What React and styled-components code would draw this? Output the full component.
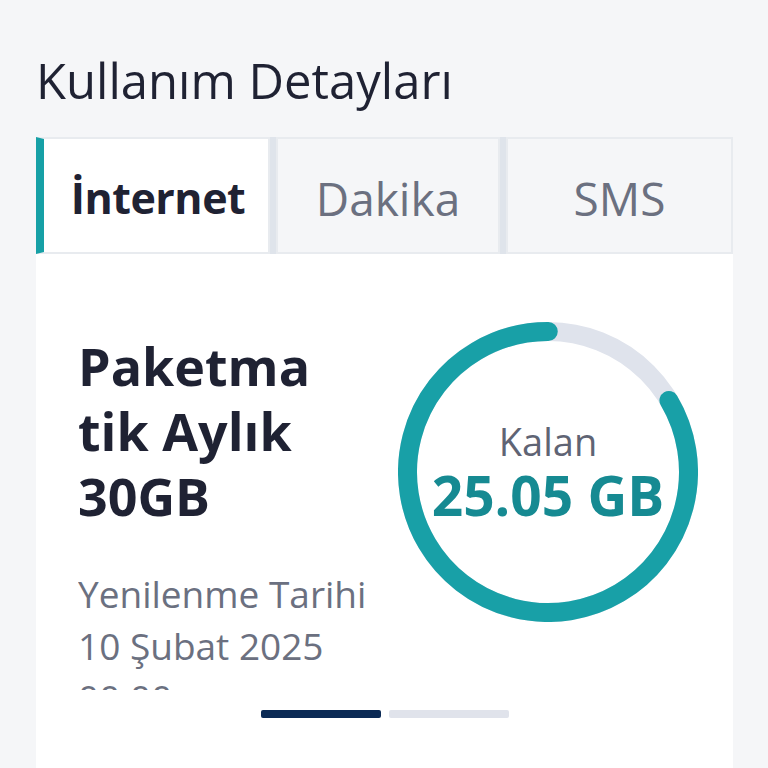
import React from "react";
import styled, { createGlobalStyle } from "styled-components";

const GlobalStyle = createGlobalStyle`
  html, body {
    margin: 0;
    padding: 0;
    background: #f5f6f8;
    font-family: "Open Sans", "Noto Sans", sans-serif;
  }
  * { box-sizing: border-box; }
`;

const Page = styled.div`
  padding: 52px 35px 0 36px;
  height: 768px;
  overflow: hidden;
`;

const Heading = styled.h1`
  margin: 0 0 29px;
  font-size: 49px;
  line-height: 56px;
  font-weight: 400;
  color: #1f2233;
`;

const Tabs = styled.div`
  display: grid;
  grid-template-columns: 234fr 224fr 227fr;
  gap: 6px;
  background: #dfe4eb;
`;

const Tab = styled.button`
  height: 117px;
  border: 2px solid #e8ebef;
  border-left: ${(p) => (p.$active ? "8px solid #16a0a6" : "2px solid #e8ebef")};
  background: ${(p) => (p.$active ? "#fff" : "#f5f6f8")};
  color: ${(p) => (p.$active ? "#1f2233" : "#6b7080")};
  font-family: inherit;
  font-size: ${(p) => (p.$active ? "43px" : "46px")};
  font-weight: ${(p) => (p.$active ? 700 : 400)};
  letter-spacing: ${(p) => (p.$active ? "-0.5px" : "0")};
  padding: 4px 0 0 ${(p) => (p.$active ? "4px" : "0")};
  cursor: pointer;
`;

const Card = styled.div`
  background: #fff;
`;

const Slide = styled.div`
  display: flex;
  justify-content: space-between;
  height: 436px;
  padding: 0 35px 0 42px;
`;

const Info = styled.div`
  padding-top: 79px;
  overflow: hidden;
`;

const PlanName = styled.h2`
  margin: 0 0 40px;
  width: 240px;
  font-size: 52px;
  line-height: 65px;
  font-weight: 700;
  color: #1f2233;
  word-break: break-all;
`;

const Renewal = styled.p`
  margin: 0;
  font-size: 37px;
  line-height: 52px;
  color: #6b7080;
  white-space: nowrap;
`;

const Gauge = styled.div`
  position: relative;
  width: 300px;
  height: 300px;
  margin-top: 68px;
  flex-shrink: 0;
`;

const GaugeText = styled.div`
  position: absolute;
  inset: 0;
  display: flex;
  flex-direction: column;
  align-items: center;
  padding-top: 95px;
`;

const GaugeLabel = styled.span`
  font-size: 38px;
  line-height: 48px;
  color: #5f6474;
`;

const GaugeValue = styled.span`
  font-size: 55px;
  line-height: 60px;
  font-weight: 700;
  color: #168a92;
`;

const Dots = styled.div`
  display: flex;
  justify-content: center;
  gap: 8px;
  padding: 20px 0 60px;
`;

const Dot = styled.span`
  width: 120px;
  height: 8px;
  border-radius: 2px;
  background: ${(p) => (p.$active ? "#0b2a55" : "#e0e3eb")};
`;

const Ring = ({ ratio }) => {
  const r = 140.5;
  const c = 2 * Math.PI * r;
  const start = (1 - ratio) * 360 - 90;
  return (
    <svg width="300" height="300" viewBox="0 0 300 300">
      <circle cx="150" cy="150" r={r} fill="none" stroke="#dfe3ec" strokeWidth="19" />
      <circle
        cx="150"
        cy="150"
        r={r}
        fill="none"
        stroke="#18a0a7"
        strokeWidth="19"
        strokeLinecap="round"
        strokeDasharray={`${c * ratio} ${c}`}
        transform={`rotate(${start} 150 150)`}
      />
    </svg>
  );
};

const App = () => {
  const total = 30;
  const left = 25.05;
  return (
    <>
      <GlobalStyle />
      <Page>
        <Heading>Kullanım Detayları</Heading>
        <Tabs>
          <Tab $active>İnternet</Tab>
          <Tab>Dakika</Tab>
          <Tab>SMS</Tab>
        </Tabs>
        <Card>
          <Slide>
            <Info>
              <PlanName>Paketmatik Aylık 30GB</PlanName>
              <Renewal>Yenilenme Tarihi</Renewal>
              <Renewal>10 Şubat 2025</Renewal>
              <Renewal>00:00</Renewal>
            </Info>
            <Gauge>
              <Ring ratio={left / total} />
              <GaugeText>
                <GaugeLabel>Kalan</GaugeLabel>
                <GaugeValue>25.05 GB</GaugeValue>
              </GaugeText>
            </Gauge>
          </Slide>
          <Dots>
            <Dot $active />
            <Dot />
          </Dots>
        </Card>
      </Page>
    </>
  );
};

export default App;
